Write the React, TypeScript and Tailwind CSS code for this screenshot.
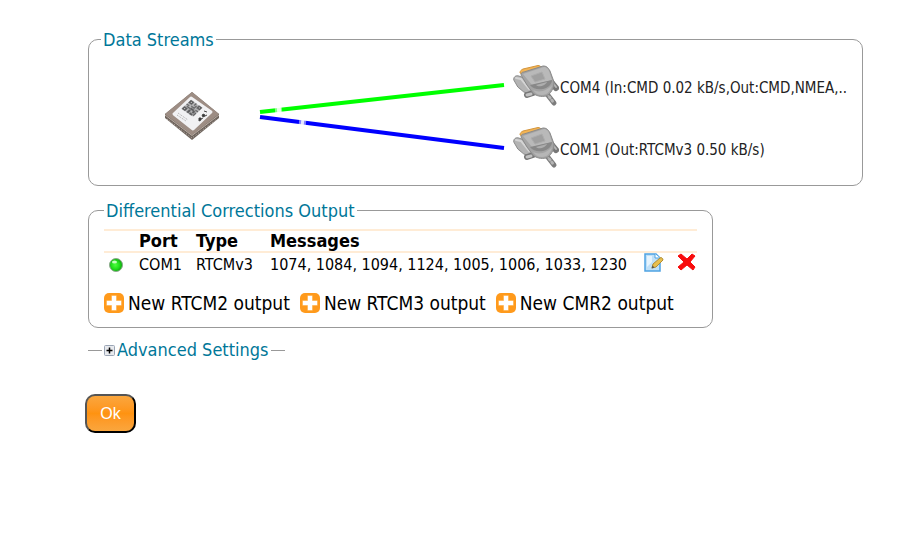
import React from "react";

function ReceiverIcon() {
  return (
    <svg width="56" height="50" viewBox="0 0 56 50" aria-hidden="true">
      <path d="M28 1 55 23v4L28 49 1 27v-4z" fill="#6f655e" />
      <path d="M28 1 55 23 28 44 1 23z" fill="#9d8d84" />
      <path d="M1 24 28 44.500 55 24" fill="none" stroke="#b9aca3" strokeWidth="1" />
      <path d="M3 28 28 47 53 28" fill="none" stroke="#c4bab3" strokeWidth="1" strokeDasharray="1 2" />
      <path d="M27 7 47 21 29 38 10 23z" fill="#f1f1f3" stroke="#f1f1f3" strokeWidth="3" strokeLinejoin="round" />
      <g transform="matrix(.8 .56 -.66 .62 27 9)">
        <path d="M0 0h14v14H0z" fill="#b5b5b7" />
        <path
          d="M0 0h4v4H0zM10 0h4v4h-4zM0 10h4v4H0zM6 0h1v3H6zM8 2h1v4H8zM5 5h3v1H5zM0 6h3v1H0zM2 8h5v1H2zM6 7h4v2H6zM11 6h3v1h-3zM10 8h2v3h-2zM13 9h1v4h-1zM6 10h2v4H6zM9 12h3v2H9z"
          fill="#5c5c5e"
          stroke="#6c6c6e"
          strokeWidth=".4"
        />
        <path d="M1.500 1.500h1v1h-1zM11.500 1.500h1v1h-1zM1.500 11.500h1v1h-1z" fill="#ddd" />
      </g>
      <path d="M14 22l10 7M13 24l9 6" stroke="#aaa" strokeWidth="1" strokeDasharray="1 1" />
      <path d="M38 24l2-1 1 2-2 1zM35 27l2 0 0 2-2 1zM40 20l3 1M41 25l2-1M37 28l2-1" fill="#333" stroke="#444" strokeWidth="1" />
    </svg>
  );
}

function SerialPortIcon() {
  return (
    <svg width="46" height="42" viewBox="0 0 46 42" className="-mb-0.5 shrink-0" aria-hidden="true">
      <path d="M7 8c0-2 1-3 3-4L25 .5c2 0 3 1 4 3L12 10z" fill="#f3b454" stroke="#d3953c" strokeWidth="1" />
      <path d="M34 29l7 9" stroke="#7c7c7c" strokeWidth="5" strokeLinecap="round" />
      <path d="M34 29l7 9" stroke="#b5b5b5" strokeWidth="3" strokeLinecap="round" strokeDasharray="1 3" />
      <path d="M38 17l5 6" stroke="#777" strokeWidth="6" strokeLinecap="round" />
      <path d="M40 18l3 4" stroke="#b8b8b8" strokeWidth="2" strokeLinecap="round" />
      <path d="M.8 15c-.5-3 2-5 5-4l8 3 9 12-3 4-9-3-6-5z" fill="#b3b3b3" stroke="#8a8a8a" strokeWidth="1" />
      <path d="M3 13l5 1 8 10" fill="none" stroke="#d4d4d4" strokeWidth="2" strokeLinecap="round" />
      <path d="M14 30l6-2" stroke="#777" strokeWidth="6" strokeLinecap="round" />
      <path d="M14 30l4-1" stroke="#c2c2c2" strokeWidth="3" strokeLinecap="round" />
      <path d="M8 10c0-2 1-3 3-3l19-6c3 0 5 1 7 5l4 11c0 6-3 12-8 14-5 1-10 0-13-3l-6-8z" fill="#a4a4a4" stroke="#8a8a8a" strokeWidth="1" />
      <path d="M10 9 31 2c2 0 4 2 5 4l3 9-20 5z" fill="#b9b9b9" />
      <path d="M18 11 29 7l3 7-10 3z" fill="#a0a0a0" stroke="#adadad" strokeWidth="1" />
      <path d="M17 20 39 15c0 4-4 8-9 9-5 1-10 0-13-4z" fill="#888" />
      <path d="M23 20l11-3c-1 3-8 6-11 3z" fill="#adadad" />
      <path d="M20 25c6 3 14 1 19-5-1 6-5 10-10 10-4 0-7-2-9-5z" fill="#b6b6b6" />
    </svg>
  );
}

function StreamLines() {
  return (
    <svg width="246" height="80" viewBox="0 0 246 80" className="shrink-0" role="img" aria-label="Active streams">
      <path d="M1 36 245 9" stroke="#00ff00" strokeWidth="4" />
      <path d="M1 41 245 72" stroke="#0000ff" strokeWidth="4" />
      <path d="M16 34.200l7-.6M40 46l7 .8" stroke="#fff" strokeOpacity=".5" strokeWidth="6" />
      <path d="M18 34.100l4-.4M42 46.300l3 .4" stroke="#fff" strokeOpacity=".8" strokeWidth="6" />
    </svg>
  );
}

function StatusIcon() {
  return (
    <svg width="16" height="16" viewBox="0 0 16 16" role="img" aria-label="Active">
      <defs>
        <radialGradient id="led" cx=".45" cy=".5" r=".6">
          <stop offset="0" stopColor="#4dff3c" />
          <stop offset=".55" stopColor="#1fdc1a" />
          <stop offset="1" stopColor="#069006" />
        </radialGradient>
      </defs>
      <circle cx="8" cy="8" r="6.500" fill="url(#led)" stroke="#8fa98f" strokeWidth="1" />
      <ellipse cx="6.500" cy="5" rx="2.500" ry="1.600" fill="#c4ffbd" />
    </svg>
  );
}

function AddIcon() {
  return (
    <svg width="20" height="20" viewBox="0 0 20 20" className="shrink-0" aria-hidden="true">
      <rect width="20" height="20" rx="5" fill="#ff9a1c" />
      <path d="M10 2.500v15M2.500 10h15" stroke="#ffd9a4" strokeWidth="5" />
      <path d="M10 3v14M3 10h14" stroke="#fff" strokeWidth="4" />
    </svg>
  );
}

function EditIcon() {
  return (
    <svg width="20" height="20" viewBox="0 0 20 20" aria-hidden="true">
      <path d="M1 1h11l4 4v13H1z" fill="#bfe0f8" stroke="#4fa3e2" strokeWidth="1.500" />
      <path d="M3 3h5v6l-5 5z" fill="#e6f4fe" />
      <path d="M11 1v4h5" fill="#fff" stroke="#4fa3e2" strokeWidth="1" />
      <path d="M8 15l1-4 7-6c1-1 3 0 3 2l-7 7z" fill="#e8bf4e" stroke="#b18d35" strokeWidth="1" />
      <path d="M7.500 15.500l1-3 2 2z" fill="#555" />
    </svg>
  );
}

function DeleteIcon() {
  return (
    <svg width="18" height="18" viewBox="0 0 18 18" aria-hidden="true">
      <path d="M3 1l6 5 5-5 3 2-5 6 5 5-2 3-6-5-6 5-3-3 6-5-6-6z" fill="#f80c0c" stroke="#f80c0c" strokeWidth="1" strokeLinejoin="round" />
    </svg>
  );
}

const streams = ["COM4 (In:CMD 0.02 kB/s,Out:CMD,NMEA,..", "COM1 (Out:RTCMv3 0.50 kB/s)"];
const outputs = ["New RTCM2 output", "New RTCM3 output", "New CMR2 output"];

export default function App() {
  return (
    <main className="min-h-screen bg-white pt-[27px] pr-[34px] pl-22 font-['DejaVu_Sans_Condensed','DejaVu_Sans',sans-serif] text-base text-black">
      <fieldset className="rounded-[10px] border border-[#999] pl-3">
        <legend className="px-0.5 pt-0.5 text-lg leading-[22px] text-[#007799]">Data Streams</legend>
        <div className="flex pt-[14px] pb-[18px]">
          <div className="flex w-[158px] items-center justify-center pl-6">
            <ReceiverIcon />
          </div>
          <div className="flex items-center">
            <StreamLines />
          </div>
          <ul className="ml-2 flex min-w-0 flex-1 flex-col gap-[22px]">
            {streams.map((label) => (
              <li key={label} className="flex items-center gap-px text-[15px] leading-5 text-[#222]">
                <SerialPortIcon />
                <span className="whitespace-nowrap pt-1.5">{label}</span>
              </li>
            ))}
          </ul>
        </div>
      </fieldset>

      <fieldset className="mt-3 w-fit rounded-[10px] border border-[#999] px-[15px] pb-3">
        <legend className="px-0.5 pt-0.5 text-lg leading-[22px] text-[#007799]">Differential Corrections Output</legend>
        <table className="mt-[7px] w-[593px] table-fixed border-collapse text-left whitespace-nowrap">
          <thead>
            <tr className="border-y-2 border-[#ffecd6] text-lg leading-5">
              <th className="w-[35px]"></th>
              <th className="w-[57px] font-bold">Port</th>
              <th className="w-[74px] font-bold">Type</th>
              <th className="w-[374px] font-bold">Messages</th>
              <th className="w-[34px]"></th>
              <th></th>
            </tr>
          </thead>
          <tbody>
            <tr className="leading-6">
              <td className="pl-1"><StatusIcon /></td>
              <td>COM1</td>
              <td>RTCMv3</td>
              <td>1074, 1084, 1094, 1124, 1005, 1006, 1033, 1230</td>
              <td className="align-top">
                <button type="button" aria-label="Edit output" className="block"><EditIcon /></button>
              </td>
              <td className="align-top">
                <button type="button" aria-label="Delete output" className="block"><DeleteIcon /></button>
              </td>
            </tr>
          </tbody>
        </table>
        <div className="mt-3.5 flex gap-2.5">
          {outputs.map((label) => (
            <button key={label} type="button" className="flex items-center gap-1 text-[19px] leading-6 whitespace-nowrap">
              <AddIcon />
              {label}
            </button>
          ))}
        </div>
      </fieldset>

      <div className="mt-2.5 flex w-fit items-center">
        <span className="w-3.5 border-t border-[#999]"></span>
        <button type="button" aria-expanded="false" className="flex items-center gap-0.5 px-0.5 text-lg leading-6 text-[#007799]">
          <svg width="11" height="11" viewBox="0 0 11 11" aria-hidden="true">
            <rect x=".5" y=".5" width="10" height="10" rx="1" fill="#e8eaee" stroke="#9aa5b5" />
            <path d="M5.500 2.500v6M2.500 5.500h6" stroke="#000" strokeWidth="1.500" />
          </svg>
          Advanced Settings
        </button>
        <span className="w-3.5 border-t border-[#999]"></span>
      </div>

      <button
        type="button"
        className="mt-8 -ml-[3px] h-[39px] w-[51px] rounded-[10px] border-2 border-t-[#555] border-r-black border-b-black border-l-[#555] bg-linear-to-b from-[#faa63d] via-[#ff9310] to-[#faa63d] font-['Liberation_Sans',Arial,sans-serif] text-base text-white"
      >
        Ok
      </button>
    </main>
  );
}
